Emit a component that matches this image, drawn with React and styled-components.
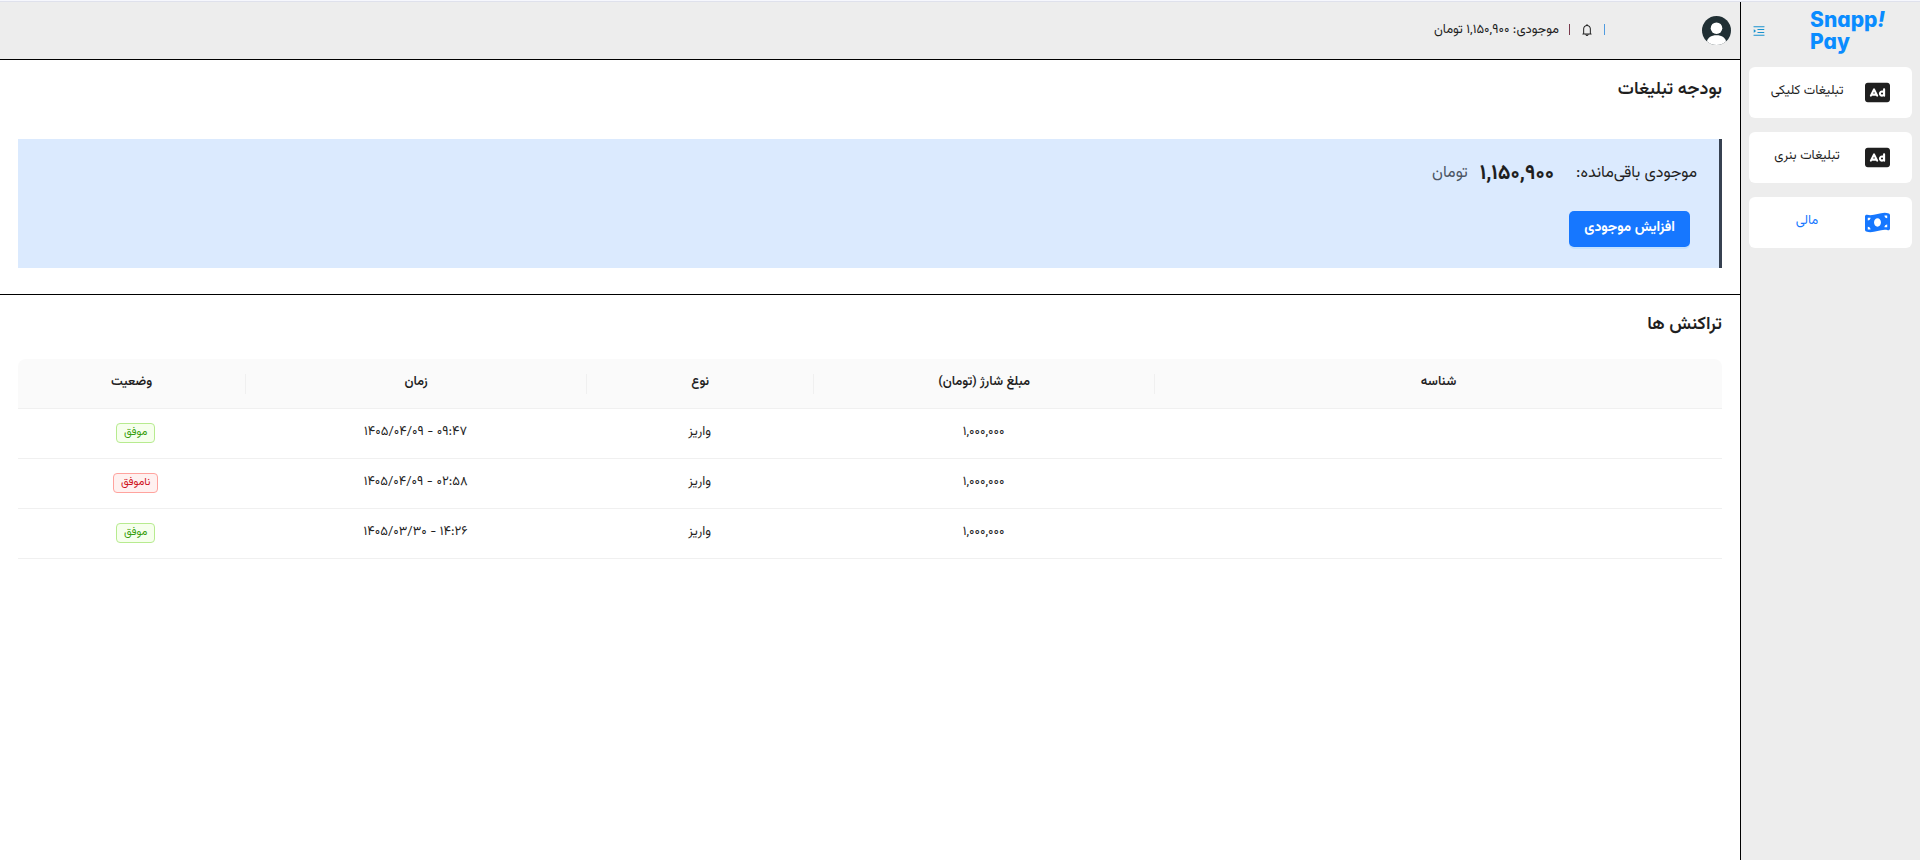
import React from "react";
import styled, { createGlobalStyle } from "styled-components";
import { FaRectangleAd, FaMoneyBillWave } from "react-icons/fa6";
import { AiOutlineMenuUnfold, AiOutlineBell } from "react-icons/ai";

const GlobalStyle = createGlobalStyle`
  *, *::before, *::after { box-sizing: border-box; }
  body {
    margin: 0;
    border-top: 1px solid #f6f7fd;
    background: #fff;
    color: #1f1f1f;
    font-family: "Vazirmatn", "Vazir", "DejaVu Sans Condensed", "DejaVu Sans", sans-serif;
    font-size: 12px;
    line-height: 20px;
  }
`;

const Shell = styled.div`
  display: flex;
  min-height: calc(100vh - 1px);
  border-top: 1px solid #dfe1ec;
`;

const Sidebar = styled.aside`
  flex: 0 0 180px;
  background: #ededed;
  border-left: 1px solid #000;
`;

const Brand = styled.div`
  display: flex;
  align-items: center;
  justify-content: space-between;
  height: 65px;
  padding: 0 35px 8px 11px;
`;

const Logo = styled.a`
  color: #0a8cff;
  direction: ltr;
  font-family: Inter, sans-serif;
  font-feature-settings: "cv11";
  font-size: 21px;
  font-weight: 800;
  line-height: 22px;
  text-decoration: none;

  span { display: block; }
  i { font-style: italic; }
`;

const IconButton = styled.button`
  display: flex;
  padding: 0;
  border: 0;
  background: none;
  color: ${(p) => p.$color};
  font-size: 14px;
  cursor: pointer;
`;

const Nav = styled.nav`
  display: flex;
  flex-direction: column;
  gap: 14px;
  padding: 0 8px;
`;

const NavItem = styled.a`
  display: flex;
  align-items: center;
  height: 51px;
  padding-right: 22px;
  border-radius: 6px;
  background: #fff;
  color: ${(p) => (p.$active ? "#1677ff" : "#1f1f1f")};
  font-size: 13px;
  text-decoration: none;

  svg { flex: none; }
`;

const NavLabel = styled.span`
  flex: 1;
  padding-bottom: 4px;
  text-align: center;
`;

const Main = styled.main`
  flex: 1;
  min-width: 0;
`;

const TopBar = styled.header`
  display: flex;
  align-items: center;
  gap: 97px;
  height: 58px;
  padding: 0 9px;
  background: #ededed;
  border-bottom: 1px solid #000;
`;

const Tools = styled.div`
  display: flex;
  align-items: center;
  gap: 10px;
  padding-bottom: 2px;
  font-size: 13px;
`;

const Separator = styled.span`
  width: 1px;
  height: 11px;
  background: ${(p) => p.$color};
`;

const Section = styled.section`
  padding: 15px 18px 26px;
  border-bottom: ${(p) => (p.$ruled ? "1px solid #000" : "0")};
`;

const Title = styled.h2`
  margin: 0 0 ${(p) => p.$gap}px;
  font-size: 18px;
  font-weight: 600;
  line-height: 30px;
`;

const BudgetCard = styled.div`
  display: flex;
  flex-direction: column;
  align-items: flex-start;
  height: 129px;
  padding: 19px 22px;
  background: #dbeafe;
  border-right: 3px solid #374151;
`;

const Balance = styled.p`
  display: flex;
  align-items: center;
  gap: 12px;
  margin: 0 0 21px;
  font-size: 16px;
  line-height: 32px;

  strong { margin-right: 10px; font-size: 21px; }
  small { color: #4b5563; font-size: 16px; }
`;

const PrimaryButton = styled.button`
  height: 36px;
  margin-right: 7px;
  padding: 0 15px 3px;
  border: 0;
  border-radius: 5px;
  background: #1677ff;
  box-shadow: 0 2px 0 rgba(5, 145, 255, 0.1);
  color: #fff;
  font: inherit;
  font-size: 14px;
  font-weight: 700;
  cursor: pointer;
`;

const Table = styled.table`
  width: 100%;
  border-spacing: 0;
  table-layout: fixed;
`;

const Column = styled.col`
  width: calc(100% * ${(p) => p.$share} / 15);
`;

const HeadCell = styled.th`
  height: 50px;
  padding: 0;
  border-bottom: 1px solid #f0f0f0;
  background: #fafafa;
  font-size: 13px;
  font-weight: 600;

  div {
    height: 20px;
    border-left: 1px solid #f0f0f0;
    line-height: 16px;
  }
  &:first-child { border-top-right-radius: 8px; }
  &:last-child { border-top-left-radius: 8px; }
  &:last-child div { border-left: 0; }
`;

const Cell = styled.td`
  height: 50px;
  padding: 0 0 4px;
  border-bottom: 1px solid #f0f0f0;
  font-size: 13px;
  text-align: center;
`;

const Tag = styled.span`
  display: inline-block;
  margin: 2px 0 0 8px;
  padding: 0 7px;
  border: 1px solid ${(p) => (p.$ok ? "#b7eb8f" : "#ffa39e")};
  border-radius: 4px;
  background: ${(p) => (p.$ok ? "#f6ffed" : "#fff1f0")};
  color: ${(p) => (p.$ok ? "#389e0d" : "#cf1322")};
  font-size: 11px;
  line-height: 18px;
`;

const Avatar = () => (
  <svg width="29" height="29" viewBox="0 0 29 29" role="img" aria-label="حساب کاربری">
    <clipPath id="avatar-clip"><circle cx="14.5" cy="14.5" r="14.5" /></clipPath>
    <g clipPath="url(#avatar-clip)">
      <rect width="29" height="29" fill="#202f34" />
      <circle cx="14.5" cy="12.2" r="5.8" fill="#fff" />
      <path d="M4.6 26.5C5.6 21.5 9 19.2 14.5 19.2S23.4 21.5 24.4 26.5L23 29H6Z" fill="#fff" />
    </g>
  </svg>
);

const navItems = [
  { label: "تبلیغات کلیکی", Icon: FaRectangleAd },
  { label: "تبلیغات بنری", Icon: FaRectangleAd },
  { label: "مالی", Icon: FaMoneyBillWave, active: true },
];

const columns = [
  { title: "شناسه", share: 5 },
  { title: "مبلغ شارژ (تومان)", share: 3 },
  { title: "نوع", share: 2 },
  { title: "زمان", share: 3 },
  { title: "وضعیت", share: 2 },
];

const transactions = [
  { amount: "۱,۰۰۰,۰۰۰", type: "واریز", time: "۱۴۰۵/۰۴/۰۹ - ۰۹:۴۷", ok: true },
  { amount: "۱,۰۰۰,۰۰۰", type: "واریز", time: "۱۴۰۵/۰۴/۰۹ - ۰۲:۵۸", ok: false },
  { amount: "۱,۰۰۰,۰۰۰", type: "واریز", time: "۱۴۰۵/۰۳/۳۰ - ۱۴:۲۶", ok: true },
];

export default function App() {
  return (
    <>
      <GlobalStyle />
      <Shell dir="rtl" lang="fa">
        <Sidebar>
          <Brand>
            <Logo href="#home"><span>Snapp<i>!</i></span><span>Pay</span></Logo>
            <IconButton type="button" $color="#1a93cf" aria-label="بستن منو">
              <AiOutlineMenuUnfold />
            </IconButton>
          </Brand>
          <Nav>
            {navItems.map(({ label, Icon, active }) => (
              <NavItem key={label} href="#" $active={active} aria-current={active ? "page" : undefined}>
                <Icon size={25} />
                <NavLabel>{label}</NavLabel>
              </NavItem>
            ))}
          </Nav>
        </Sidebar>
        <Main>
          <TopBar>
            <Avatar />
            <Tools>
              <Separator $color="#4f9be0" />
              <IconButton type="button" $color="#1f1f1f" aria-label="اعلان‌ها">
                <AiOutlineBell />
              </IconButton>
              <Separator $color="#7a3a4c" />
              <span>موجودی: ۱,۱۵۰,۹۰۰ تومان</span>
            </Tools>
          </TopBar>
          <Section $ruled>
            <Title $gap={34}>بودجه تبلیغات</Title>
            <BudgetCard>
              <Balance>
                <span>موجودی باقی‌مانده:</span>
                <strong>۱,۱۵۰,۹۰۰</strong>
                <small>تومان</small>
              </Balance>
              <PrimaryButton type="button">افزایش موجودی</PrimaryButton>
            </BudgetCard>
          </Section>
          <Section>
            <Title $gap={19}>تراکنش ها</Title>
            <Table>
              <colgroup>
                {columns.map((c) => <Column key={c.title} $share={c.share} />)}
              </colgroup>
              <thead>
                <tr>
                  {columns.map((c) => (
                    <HeadCell key={c.title} scope="col"><div>{c.title}</div></HeadCell>
                  ))}
                </tr>
              </thead>
              <tbody>
                {transactions.map((t) => (
                  <tr key={t.time}>
                    <Cell />
                    <Cell>{t.amount}</Cell>
                    <Cell>{t.type}</Cell>
                    <Cell dir="ltr">{t.time}</Cell>
                    <Cell><Tag $ok={t.ok}>{t.ok ? "موفق" : "ناموفق"}</Tag></Cell>
                  </tr>
                ))}
              </tbody>
            </Table>
          </Section>
        </Main>
      </Shell>
    </>
  );
}
